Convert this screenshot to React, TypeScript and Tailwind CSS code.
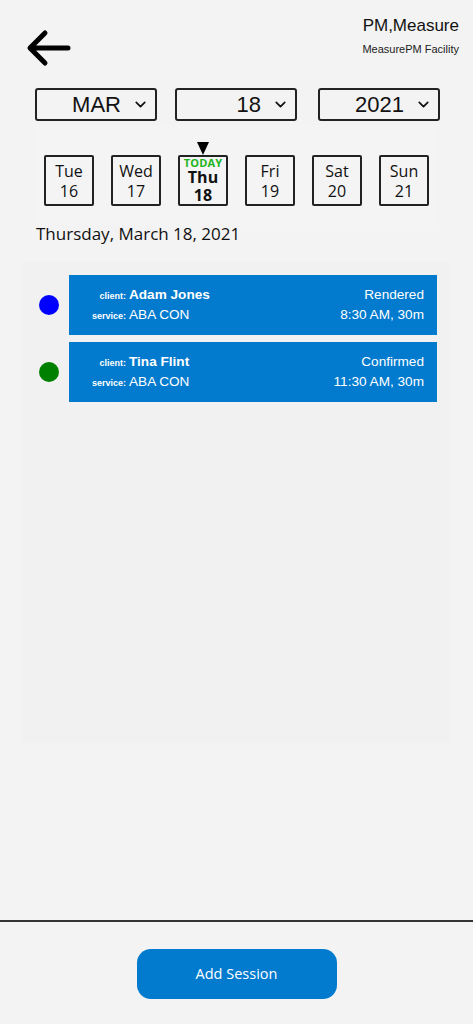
import { ChevronDown } from "lucide-react"

const days = [
  { d: "Tue", n: 16 },
  { d: "Wed", n: 17 },
  { d: "Thu", n: 18, today: true },
  { d: "Fri", n: 19 },
  { d: "Sat", n: 20 },
  { d: "Sun", n: 21 },
]

const sessions = [
  { client: "Adam Jones", service: "ABA CON", status: "Rendered", time: "8:30 AM, 30m", dot: "bg-[#0000ff]" },
  { client: "Tina Flint", service: "ABA CON", status: "Confirmed", time: "11:30 AM, 30m", dot: "bg-[#008000]" },
]

function Select({ value, w }: { value: string; w: string }) {
  return (
    <div className={`${w} h-[33px] border-2 border-[#222] rounded-[3px] flex items-center justify-end pr-[6px] gap-[11px]`}>
      <span className="text-[22px] leading-none text-[#111]">{value}</span>
      <ChevronDown size={17} strokeWidth={2.4} className="text-[#111]" />
    </div>
  )
}

export default function App() {
  return (
    <div className="w-[473px] h-[1024px] bg-[#f3f3f3] flex flex-col font-['Liberation_Sans',Arial,sans-serif] overflow-hidden">
      {/* header */}
      <div className="flex justify-between items-start h-[88px]">
        <svg width="48" height="40" viewBox="0 0 48 40" className="mt-[28px] ml-[25px]">
          <path d="M6 20 H43 M20 5 L5 20 L20 35" fill="none" stroke="#000" strokeWidth="5" strokeLinecap="round" strokeLinejoin="round" />
        </svg>
        <div className="flex flex-col items-end pr-[14px] pt-[16px]">
          <span className="text-[17px] leading-[20px] text-[#111]">PM,Measure</span>
          <span className="text-[11px] leading-[14px] mt-[6px] text-[#222]">MeasurePM Facility</span>
        </div>
      </div>

      {/* dropdowns */}
      <div className="flex pl-[35px] h-[33px]">
        <Select value="MAR" w="w-[122px]" />
        <div className="w-[18px]" />
        <Select value="18" w="w-[122px]" />
        <div className="w-[21px]" />
        <Select value="2021" w="w-[122px]" />
      </div>

      {/* week strip */}
      <div className="mx-[36px] mt-[4px] bg-[#f4f4f4] h-[100px] pt-[30px] font-['Open_Sans','Noto_Sans',sans-serif]">
        <div className="flex pl-[8px] gap-[17px]">
          {days.map((x) => (
            <div key={x.d} className="relative">
              {x.today && (
                <svg width="12" height="13" viewBox="0 0 12 13" className="absolute left-[19px] -top-[13px]">
                  <path d="M0 0 H12 L6 13 Z" fill="#000" />
                </svg>
              )}
              {x.today ? (
                <div className="w-[50px] h-[51px] border-2 border-[#222] rounded-[2px] flex flex-col items-center text-[#111]">
                  <span className="text-[11px] leading-[11px] font-bold text-[#1db51d] tracking-[0.2px]">TODAY</span>
                  <span className="text-[16px] leading-[19px] font-bold">{x.d}</span>
                  <span className="text-[16px] leading-[17px] font-bold">{x.n}</span>
                </div>
              ) : (
                <div className="w-[50px] h-[51px] border-2 border-[#222] rounded-[2px] flex flex-col items-center justify-center text-[#111]">
                  <span className="text-[16px] leading-[20px]">{x.d}</span>
                  <span className="text-[16px] leading-[20px]">{x.n}</span>
                </div>
              )}
            </div>
          ))}
        </div>
      </div>
      <div className="pl-[36px] -mt-[3px] text-[17px] leading-[24px] text-[#111] font-['Open_Sans','Noto_Sans',sans-serif]">
        Thursday, March 18, 2021
      </div>

      {/* sessions panel */}
      <div className="mx-[22px] w-[428px] mt-[16px] h-[481px] bg-[#f1f1f1] pt-[13px] flex flex-col gap-[7px]">
        {sessions.map((s) => (
          <div key={s.client} className="flex items-center">
            <div className="w-[47px] pl-[17px]">
              <div className={`w-[20px] h-[20px] rounded-full ${s.dot}`} />
            </div>
            <div className="w-[368px] h-[60px] bg-[#027acd] flex justify-between items-center text-white">
              <div className="flex flex-col">
                <div className="flex items-baseline h-[20px]">
                  <span className="w-[57px] text-right text-[9px] font-bold">client:</span>
                  <span className="ml-[3px] text-[13.6px] font-bold">{s.client}</span>
                </div>
                <div className="flex items-baseline h-[20px]">
                  <span className="w-[57px] text-right text-[9px] font-bold">service:</span>
                  <span className="ml-[3px] text-[13.6px]">{s.service}</span>
                </div>
              </div>
              <div className="flex flex-col items-end pr-[13px] text-[13.6px]">
                <span className="h-[20px]">{s.status}</span>
                <span className="h-[20px]">{s.time}</span>
              </div>
            </div>
          </div>
        ))}
      </div>

      <div className="flex-1" />
      {/* footer */}
      <div className="h-[104px] border-t-2 border-[#333] flex justify-center pt-[27px]">
        <button className="w-[200px] h-[50px] rounded-[14px] bg-[#027acd] text-white text-[14.5px] font-['Open_Sans','Noto_Sans',sans-serif]">
          Add Session
        </button>
      </div>
    </div>
  )
}
